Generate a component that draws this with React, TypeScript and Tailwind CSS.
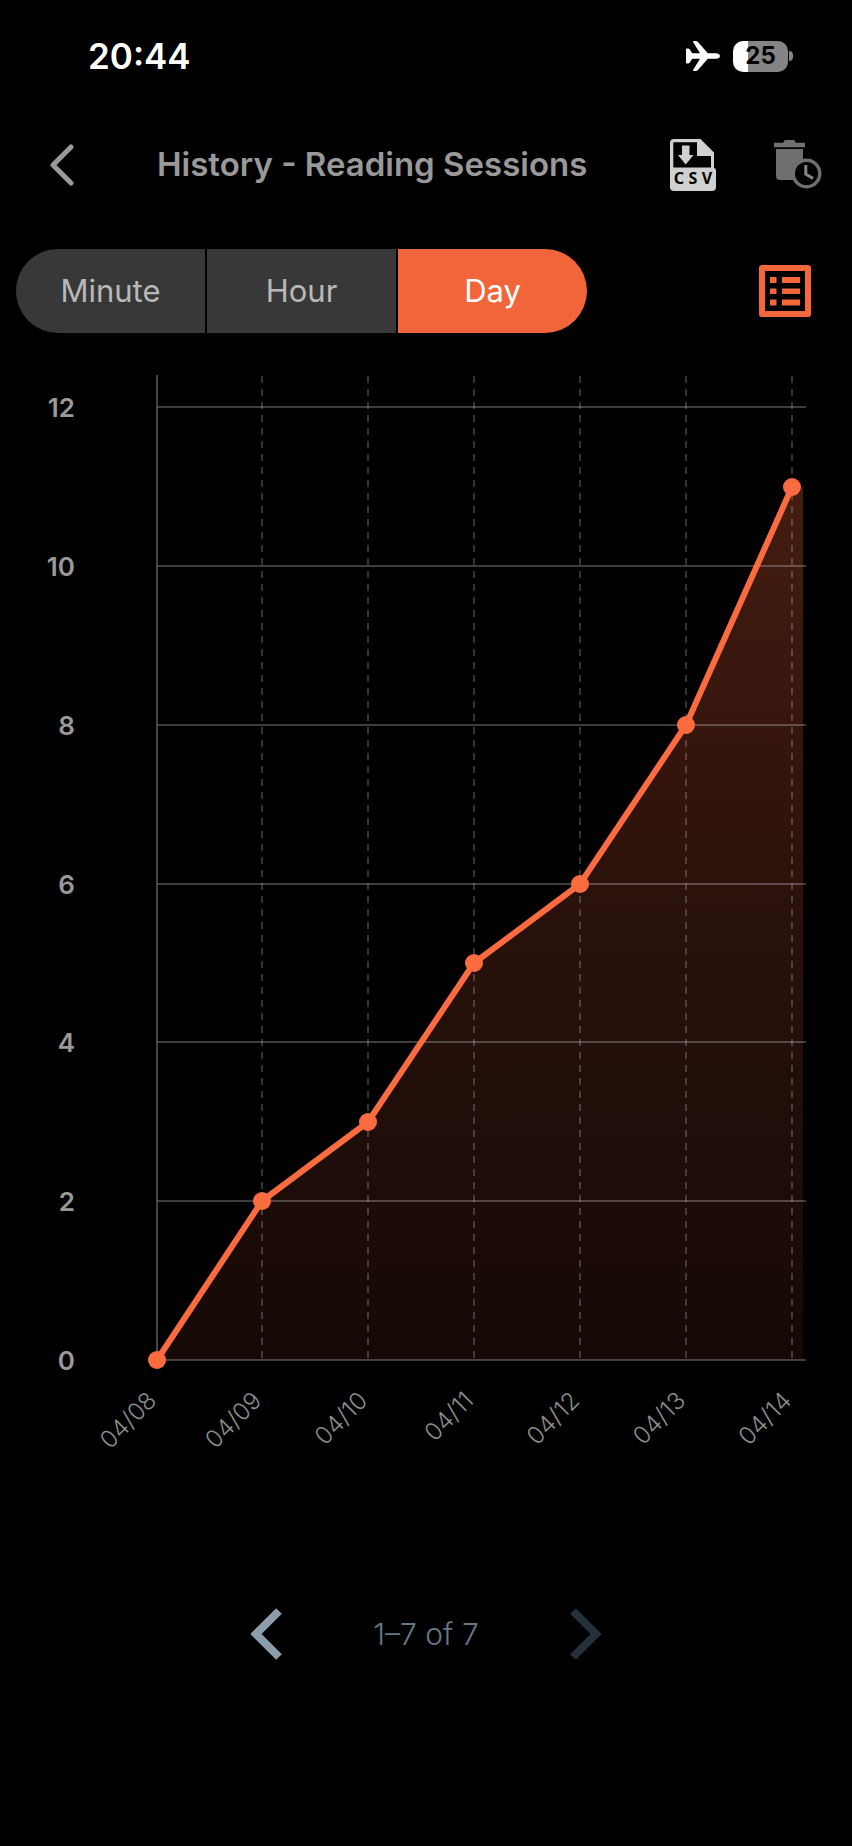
import { useState } from "react";

const sessions = [
  { date: "04/08", count: 0 },
  { date: "04/09", count: 2 },
  { date: "04/10", count: 3 },
  { date: "04/11", count: 5 },
  { date: "04/12", count: 6 },
  { date: "04/13", count: 8 },
  { date: "04/14", count: 11 },
];

const ranges = ["Minute", "Hour", "Day"];

const PlaneIcon = () => (
  <svg viewBox="0 0 34 30" className="h-[30px] w-[34px]" fill="white">
    <path d="M0 8.6Q0 7.6 1 7.6H2.2Q3 7.6 3.5 8.3L6.3 12.2H14L7.2 1.2Q6.6 0 7.8 0H10Q11 0 11.7 .8L21.8 12.2H30Q34 12.6 34 15Q34 17.4 30 17.8H21.8L11.7 29.2Q11 30 10 30H7.8Q6.6 30 7.2 28.8L14 17.8H6.3L3.5 21.7Q3 22.4 2.2 22.4H1Q0 22.4 0 21.4Z" />
  </svg>
);

const Battery = () => (
  <div className="flex items-center gap-px">
    <div className="flex h-[31px] w-[55px] items-center justify-center rounded-[10px] bg-linear-to-r from-white from-27% to-[#858585] to-27% text-2xl font-bold text-black">
      25
    </div>
    <div className="h-[10px] w-1 rounded-r-full bg-[#858585]" />
  </div>
);

const CsvIcon = () => (
  <svg viewBox="0 0 46 52" className="h-[52px] w-[46px]">
    <path
      fill="#d0d0d0"
      fillRule="evenodd"
      d="M4 0H30.5L44 13.5V29Q46 29.5 46 31V48Q46 52 42 52H4Q0 52 0 48V4Q0 0 4 0ZM3.3 3.3V28.6H41V17H27V3.3Z"
    />
    <path fill="#d0d0d0" d="M12 6.5H19.5V16H23.5L15.7 25.5L8 16H12Z" />
    <g
      textAnchor="middle"
      fill="black"
      className="font-['Noto_Sans'] text-base font-bold"
    >
      <text x="9" y="45">C</text>
      <text x="23" y="45">S</text>
      <text x="37" y="45">V</text>
    </g>
  </svg>
);

const TrashClockIcon = () => (
  <svg viewBox="0 0 48 49" className="h-[49px] w-12">
    <g fill="#6f6f6f">
      <path d="M0 2.8H9L11 0H20L22 2.8H31V7.2H0Z" />
      <path d="M2 9H29V36Q29 40 25 40H6Q2 40 2 36Z" />
    </g>
    <circle cx="32.5" cy="33.5" r="15" fill="#6f6f6f" />
    <circle cx="32.5" cy="33.5" r="11.5" fill="black" />
    <path d="M31.8 25V34.2L39 38.4" fill="none" stroke="#858585" strokeWidth="3" />
  </svg>
);

const ListIcon = () => (
  <svg viewBox="0 0 52 52" className="h-[52px] w-[52px]" fill="#f3673b">
    <path
      fillRule="evenodd"
      d="M3 0H49Q52 0 52 3V49Q52 52 49 52H3Q0 52 0 49V3Q0 0 3 0ZM6 6V46H46V6Z"
    />
    <path d="M11 12H17.5V18H11ZM11 23.5H17.5V29H11ZM11 34.5H17.5V40.5H11Z" />
    <path d="M23 12H41V18H23ZM23 23.5H41V29H23ZM23 34.5H41V40.5H23Z" />
  </svg>
);

// plot area of the chart, in viewBox units
const left = 157;
const right = 806;
const top = 42;
const bottom = 1027;
const getX = (i: number) => (i === 0 ? left : 156 + i * 106);
const getY = (count: number) => Math.round(bottom - count * 79.4);

const Chart = () => {
  const points = sessions.map((s, i) => `${getX(i)},${getY(s.count)}`).join(" ");
  return (
    <svg
      viewBox="0 0 852 1140"
      className="w-full"
      role="img"
      aria-label="Reading sessions per day"
    >
      <defs>
        <linearGradient id="area" x1="0" y1="0" x2="0" y2="1">
          <stop offset="0" stopColor="#451c10" />
          <stop offset="0.5" stopColor="#29110b" />
          <stop offset="1" stopColor="#150906" />
        </linearGradient>
      </defs>
      <polygon
        points={`${points} 803,${getY(11)} 803,${bottom} ${left},${bottom}`}
        fill="url(#area)"
      />
      {[0, 2, 4, 6, 8, 10, 12].map((n) => (
        <g key={n}>
          <line
            x1={left}
            x2={right}
            y1={getY(n)}
            y2={getY(n)}
            stroke="white"
            strokeOpacity="0.32"
            strokeWidth="1.5"
          />
          <text
            x="75"
            y={getY(n) + 10}
            textAnchor="end"
            fill="#999999"
            className="text-[26px] font-semibold"
          >
            {n}
          </text>
        </g>
      ))}
      <line x1={left} x2={left} y1={top} y2={bottom} stroke="#5c5c5c" strokeWidth="1.5" />
      {sessions.map((s, i) => (
        <g key={s.date}>
          {i > 0 && (
            <line
              x1={getX(i)}
              x2={getX(i)}
              y1={top + 1}
              y2={bottom}
              stroke="white"
              strokeOpacity="0.4"
              strokeWidth="1"
              strokeDasharray="7 6"
            />
          )}
          <text
            textAnchor="end"
            transform={`translate(${getX(i) + 1} 1069) rotate(-45)`}
            fill="#8c8c8c"
            className="text-2xl font-light"
          >
            {s.date}
          </text>
        </g>
      ))}
      <polyline
        points={points}
        fill="none"
        stroke="#fa6c40"
        strokeWidth="6"
        strokeLinejoin="round"
      />
      {sessions.map((s, i) => (
        <circle key={s.date} cx={getX(i)} cy={getY(s.count)} r="9" fill="#fa6c40" />
      ))}
    </svg>
  );
};

const App = () => {
  const [range, setRange] = useState("Day");
  return (
    <div className="min-h-screen bg-black font-[Inter,sans-serif]">
      <div className="flex h-28 items-center justify-between pr-[59px] pl-[88px]">
        <span className="text-[35px] font-semibold text-white">20:44</span>
        <div className="flex items-center gap-[13px]">
          <PlaneIcon />
          <Battery />
        </div>
      </div>

      <header className="flex h-[105px] items-center pr-[30px] pl-[49px]">
        <button aria-label="Back">
          <svg viewBox="0 0 26 42" className="h-[42px] w-[26px]" fill="none">
            <path
              d="M22 3L4 21L22 39"
              stroke="#999999"
              strokeWidth="5"
              strokeLinecap="round"
              strokeLinejoin="round"
            />
          </svg>
        </button>
        <h1 className="ml-[82px] flex-1 text-[33px] font-semibold whitespace-nowrap text-[#999999]">
          History - Reading Sessions
        </h1>
        <div className="flex items-center gap-[58px]">
          <button aria-label="Export CSV">
            <CsvIcon />
          </button>
          <button aria-label="Delete history">
            <TrashClockIcon />
          </button>
        </div>
      </header>

      <div className="mt-8 flex items-center justify-between pr-[41px] pl-4">
        <div className="flex h-[84px] w-[571px] gap-0.5 overflow-hidden rounded-full">
          {ranges.map((r) => (
            <button
              key={r}
              onClick={() => setRange(r)}
              aria-pressed={range === r}
              className={
                range === r
                  ? "flex-1 bg-[#f2653a] text-[31px] text-white"
                  : "flex-1 bg-[#383838] text-[31px] text-[#b8b8b8]"
              }
            >
              {r}
            </button>
          ))}
        </div>
        <button aria-label="Show list">
          <ListIcon />
        </button>
      </div>

      <Chart />

      <nav className="flex items-center justify-center pt-[135px] pb-28">
        <button aria-label="Previous page">
          <svg viewBox="0 0 32 52" className="h-[52px] w-8" fill="none">
            <path d="M29 3L6 26L29 49" stroke="#8b9dab" strokeWidth="8" />
          </svg>
        </button>
        <span className="w-72 text-center text-[30px] font-light text-[#64788a]">
          1–7 of 7
        </span>
        <button aria-label="Next page" disabled>
          <svg viewBox="0 0 32 52" className="h-[52px] w-8" fill="none">
            <path d="M3 3L26 26L3 49" stroke="#25303a" strokeWidth="8" />
          </svg>
        </button>
      </nav>
    </div>
  );
};

export default App;
